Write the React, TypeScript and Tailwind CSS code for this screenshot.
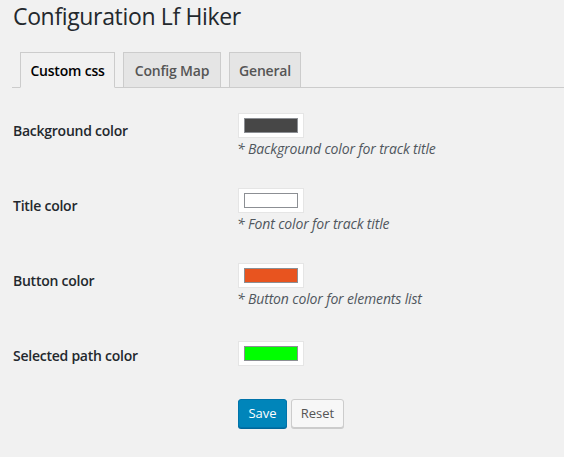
import React from "react";

const font = { fontFamily: '"Segoe UI", "Open Sans", "Noto Sans", sans-serif' };

function Swatch({ color, extraTop }: { color: string; extraTop?: boolean }) {
  return (
    <div
      className={`flex h-[23px] w-[64px] items-start justify-center bg-white pt-[4px] shadow-[0_0_0_1px_#e5e5e5] ${extraTop ? "mt-[15px]" : "mt-[12px]"}`}
    >
      <div className="h-[15px] w-[54px] border border-[#8c8f94]" style={{ backgroundColor: color }} />
    </div>
  );
}

function Row({ label, color, desc, last }: { label: string; color: string; desc?: string; last?: boolean }) {
  return (
    <div className={`flex ${last ? "h-[73px]" : "h-[75px]"}`}>
      <div className="w-[226px] pt-[20px] text-[14px] font-semibold leading-[18px] tracking-[-0.25px] text-[#23282d]">
        {label}
      </div>
      <div className="flex flex-col">
        <Swatch color={color} extraTop={last} />
        {desc && (
          <div className="-ml-[2px] mt-[2px] text-[14px] italic leading-[20px] tracking-[-0.15px] text-[#50575e]">
            {desc}
          </div>
        )}
      </div>
    </div>
  );
}

export default function App() {
  return (
    <div className="min-h-[457px] w-[564px] overflow-hidden bg-[#f1f1f1] text-[#23282d]" style={font}>
      <div className="pl-[12px]">
        <h1 className="pl-[1px] pt-[2px] text-[23px] font-normal leading-[29px] tracking-[-0.35px] text-[#23282d]">
          Configuration Lf Hiker
        </h1>
        <div className="mt-[21px] flex h-[36px] items-end gap-[8px] border-b border-[#ccc] pl-[8px]">
          <div className="-mb-px flex h-[36px] w-[95px] items-center justify-center border border-b-[#f1f1f1] border-[#ccc] bg-[#f1f1f1] text-[14px] font-semibold tracking-[-0.2px] text-black">
            Custom css
          </div>
          <div className="flex h-[35px] w-[98px] items-center justify-center border border-b-0 border-[#ccc] bg-[#e5e5e5] text-[14px] font-semibold tracking-[-0.2px] text-[#555]">
            Config Map
          </div>
          <div className="flex h-[35px] w-[72px] items-center justify-center border border-b-0 border-[#ccc] bg-[#e5e5e5] text-[14px] font-semibold tracking-[-0.2px] text-[#555]">
            General
          </div>
        </div>
      </div>
      <div className="pl-[13px] pt-[14px]">
        <Row label="Background color" color="#474747" desc="* Background color for track title" />
        <Row label="Title color" color="#ffffff" desc="* Font color for track title" />
        <Row label="Button color" color="#e8541f" desc="* Button color for elements list" />
        <Row label="Selected path color" color="#00ff00" last />
        <div className="mt-[-1px] flex gap-[4px] pl-[225px]">
          <button className="h-[29px] w-[49px] rounded-[3px] border border-[#0073aa] bg-[#0085ba] text-[13px] text-white shadow-[0_1px_0_#006799]">
            Save
          </button>
          <button className="h-[29px] w-[53px] rounded-[3px] border border-[#ccc] bg-[#f7f7f7] text-[13px] text-[#555] shadow-[0_1px_0_#ccc]">
            Reset
          </button>
        </div>
      </div>
    </div>
  );
}
